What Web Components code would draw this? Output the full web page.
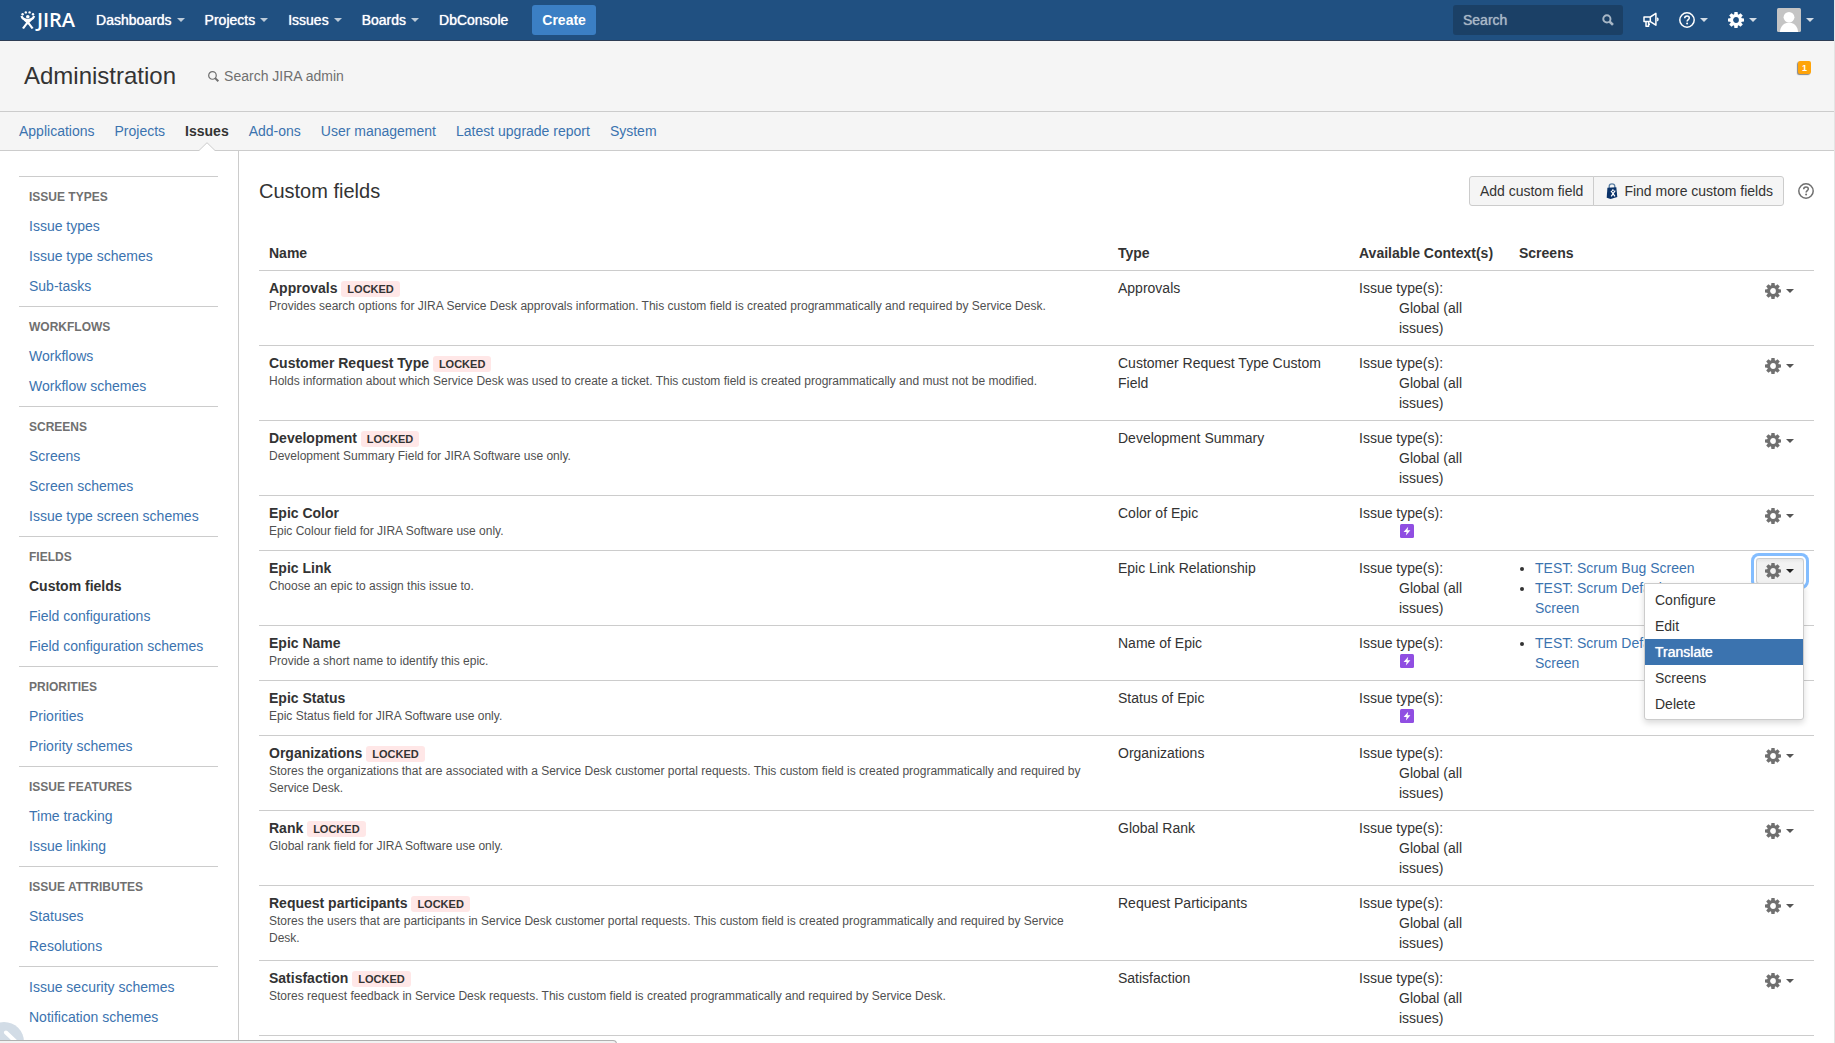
<!DOCTYPE html>
<html lang="en">
<head>
<meta charset="utf-8">
<title>Custom fields - JIRA</title>
<style>
  html { background: #fff; }
  body { margin: 0; font: 14px/20px "Liberation Sans", Arial, sans-serif; color: #333; }
</style>
</head>
<body>
<jira-app></jira-app>
<script>
const define = (name, css, html) => {
  customElements.define(name, class extends HTMLElement {
    connectedCallback() {
      if (this.shadowRoot) return;
      const root = this.attachShadow({ mode: 'open' });
      const body = typeof html === 'function' ? html(this) : html;
      root.innerHTML = `<style>*{box-sizing:border-box}a{color:#3b73af;text-decoration:none}button{font:inherit;color:inherit;cursor:pointer}${css}</style>${body}`;
    }
  });
};

/* ---------- icons ---------- */
const teeth = [0, 45, 90, 135, 180, 225, 270, 315]
  .map(a => `<path d="M6 3.6 6.4 0h3.2l.4 3.6z" transform="rotate(${a} 8 8)"/>`).join('');
const ICONS = {
  gear: `<g fill="currentColor">${teeth}</g><circle cx="8" cy="8" r="4.4" fill="none" stroke="currentColor" stroke-width="3"/>`,
  help: `<g fill="none" stroke="currentColor" stroke-width="1.5"><circle cx="8" cy="8" r="7.2"/><path d="M5.7 6.3C5.7 4.9 6.7 4 8 4s2.3.9 2.3 2.1c0 1.5-2.2 1.7-2.2 3.5"/></g><circle cx="8.1" cy="11.6" r="1" fill="currentColor"/>`,
  search: `<g fill="none" stroke="currentColor"><circle cx="6.5" cy="6.5" r="4.8" stroke-width="2.6"/><path d="M10 10l4.6 4.6" stroke-width="3.4"/></g>`,
  find: `<g fill="none" stroke="currentColor"><circle cx="6.5" cy="6.5" r="5.5" stroke-width="1.8"/><path d="M10 10l5 5" stroke-width="3"/></g>`,
  horn: `<g fill="none" stroke="currentColor" stroke-width="1.5" stroke-linejoin="round"><path d="M1 5h6.3v4.6H1zM7.3 5l5.6-3.6v11.8L7.3 9.6M3 9.6v4.7h2.6V9.6M5.6 12.2H7"/><path d="M14.2 5.8c1 .8 1 2.2 0 3"/></g>`,
  epic: `<rect x="1" y="1" width="14" height="14" rx="1.5" fill="#904ee2"/><path d="M9.2 3.8 4.6 8.900h3l-.7 3.500L11.400 7.300H8.500z" fill="#fff"/>`,
  avatar: `<rect width="16" height="16" rx="1" fill="#c4c4c4"/><circle cx="8" cy="6.2" r="3.6" fill="#fff"/><path d="M1.9 16c.4-3.4 2-5.4 4.4-6h3.4c2.4.6 4 2.6 4.4 6z" fill="#fff"/>`,
  bag: `<path d="M5.2 5V3.3C5.2 1.7 6.3.8 8 .8s2.8.9 2.8 2.500V5" fill="none" stroke="#5b7fa3" stroke-width="1.3"/><path d="M3.4 4.8 12.3 4.2 13.3 14 6.6 16l-3.9-1.2z" fill="#0b3369"/><path d="M7 7.8 11 13.3M11.2 7.6 7.2 13.3" stroke="#fff" stroke-width="1.2"/><circle cx="8.9" cy="7.2" r=".9" fill="#fff"/>`,
  person: `<g fill="currentColor"><circle cx="2.6" cy="3.3" r="1.2"/><circle cx="5.8" cy="1.4" r="1.2"/><circle cx="9.6" cy="1.4" r="1.2"/><circle cx="13" cy="3.3" r="1.2"/><circle cx="7.8" cy="5.7" r="1.8"/></g><g fill="none" stroke="currentColor" stroke-width="2.2"><path d="M1.4 5C2.6 8 4.6 9 7.800 9s5.200-1 6.400-4"/><path d="M4.500 8.600C7 10.600 10.500 13.600 12.600 17.600M11.100 8.600C8.600 10.600 5.100 13.600 3 17.600"/></g>`
};
define('ui-icon', `:host{display:inline-block;width:16px;height:16px;flex:none}svg{display:block;width:100%;height:100%;overflow:visible}`,
  el => {
    const name = el.getAttribute('name');
    return `<svg viewBox="0 0 16 ${name === 'person' ? 18 : 16}" aria-hidden="true">${ICONS[name]}</svg>`;
  });
define('ui-caret', `:host{display:inline-block;flex:none;border:4px solid transparent;border-top-color:currentColor;border-bottom:0}`, '');

/* ---------- top bar ---------- */
define('nav-item', `
  :host{display:block}
  a{display:flex;align-items:center;color:#fff;gap:5px;text-shadow:0 0 1px #fff}
  ui-caret{color:#bdcbd9}`,
  el => `<a href="#"><slot></slot>${el.hasAttribute('menu') ? '<ui-caret></ui-caret>' : ''}</a>`);

define('top-bar', `
  :host{display:flex;align-items:center;height:41px;padding:0 20px;background:#205081;border-bottom:1px solid #2e3d54;color:#fff}
  .logo{display:flex;align-items:center;gap:1px;margin-right:21px;color:#fff;font:600 20px/20px "Open Sans",sans-serif}
  .logo ui-icon{height:18px}
  nav{display:flex;gap:20px}
  .create{height:30px;margin-left:24px;padding:0 10px;border:0;border-radius:3px;background:#3b7fc4;font-weight:bold}
  .tools{display:flex;align-items:center;gap:20px;margin-left:auto}
  .search{display:flex;align-items:center;width:170px;height:30px;padding:0 9px 0 10px;border-radius:3px;background:#1b4066;color:#a8b7c6}
  input{flex:1;min-width:0;padding:0;border:0;background:none;font:inherit;color:inherit;outline:0}
  input::placeholder{color:#a8b7c6;opacity:1;text-shadow:0 0 1px #a8b7c6}
  .search ui-icon{width:12px;height:12px}
  .tool{display:flex;align-items:center;gap:5px;margin:0;padding:0;border:0;background:none}
  .tool ui-caret{color:#d2dce6}
  .avatar ui-icon{width:24px;height:24px}`, `
  <a class="logo" href="#"><ui-icon name="person"></ui-icon><span>JIRA</span></a>
  <nav>
    <nav-item menu>Dashboards</nav-item><nav-item menu>Projects</nav-item><nav-item menu>Issues</nav-item><nav-item menu>Boards</nav-item><nav-item>DbConsole</nav-item>
  </nav>
  <button class="create">Create</button>
  <div class="tools">
    <label class="search"><input type="text" placeholder="Search" aria-label="Search"><ui-icon name="search"></ui-icon></label>
    <button class="tool" aria-label="Feedback"><ui-icon name="horn"></ui-icon></button>
    <button class="tool" aria-label="Help"><ui-icon name="help"></ui-icon><ui-caret></ui-caret></button>
    <button class="tool" aria-label="Administration"><ui-icon name="gear"></ui-icon><ui-caret></ui-caret></button>
    <button class="tool avatar" aria-label="Profile"><ui-icon name="avatar"></ui-icon><ui-caret></ui-caret></button>
  </div>`);

/* ---------- administration heading and tabs ---------- */
define('admin-header', `
  :host{display:flex;align-items:center;height:71px;padding:0 23px 0 24px;background:#f5f5f5;border-bottom:1px solid #ccc}
  h1{margin:0;font-size:24px;line-height:30px;font-weight:normal}
  a{display:flex;align-items:center;gap:5px;margin-left:32px;color:#707070}
  a ui-icon{width:11px;height:11px}
  .badge{align-self:flex-start;width:13px;height:13px;margin:20px 0 0 auto;padding:0;border:0;border-radius:2px;background:#ffa40a;box-shadow:-1px 1px 1px #888;color:#fff;font-size:9px;line-height:10px;font-weight:bold;text-align:center}`, `
  <h1>Administration</h1>
  <a href="#"><ui-icon name="find"></ui-icon>Search JIRA admin</a>
  <button class="badge">1</button>`);

define('admin-tabs', `
  :host{display:block;background:#f5f5f5;border-bottom:1px solid #ccc}
  nav{display:flex;gap:20px;height:38px;padding:0 19px;line-height:38px}
  .on{position:relative;color:#333;font-weight:bold}
  svg{position:absolute;left:50%;bottom:-1px;margin-left:-8px}`, `
  <nav>
    <a href="#">Applications</a><a href="#">Projects</a>
    <a href="#" class="on" aria-current="page">Issues<svg width="16" height="9"><path d="M0 8.5 8 .7l8 7.8V9H0z" fill="#fff"/><path d="M0 8.5 8 .7l8 7.8" fill="none" stroke="#ccc"/></svg></a>
    <a href="#">Add-ons</a><a href="#">User management</a><a href="#">Latest upgrade report</a><a href="#">System</a>
  </nav>`);

/* ---------- sidebar ---------- */
define('side-group', `
  :host{display:block;padding:5px 10px;border-top:1px solid #ccc}
  h2{margin:0;padding:5px 0 4px;font-size:12px;line-height:20px;color:#707070;text-transform:uppercase}
  ul{margin:0;padding:0;list-style:none}
  li{line-height:30px}
  .on{color:#333;font-weight:bold}`,
  el => {
    const t = el.getAttribute('heading');
    const on = el.getAttribute('current');
    return `${t ? `<h2>${t}</h2>` : ''}<ul>${el.getAttribute('links').split('|')
      .map(l => `<li><a href="#"${l === on ? ' class="on" aria-current="page"' : ''}>${l}</a></li>`).join('')}</ul>`;
  });
define('side-nav', `:host{display:block;flex:none;width:239px;padding:25px 20px 0 19px;border-right:1px solid #ccc}`, `
  <nav>
    <side-group heading="Issue types" links="Issue types|Issue type schemes|Sub-tasks"></side-group>
    <side-group heading="Workflows" links="Workflows|Workflow schemes"></side-group>
    <side-group heading="Screens" links="Screens|Screen schemes|Issue type screen schemes"></side-group>
    <side-group heading="Fields" current="Custom fields" links="Custom fields|Field configurations|Field configuration schemes"></side-group>
    <side-group heading="Priorities" links="Priorities|Priority schemes"></side-group>
    <side-group heading="Issue features" links="Time tracking|Issue linking"></side-group>
    <side-group heading="Issue attributes" links="Statuses|Resolutions"></side-group>
    <side-group links="Issue security schemes|Notification schemes"></side-group>
  </nav>`);

/* ---------- table parts ---------- */
define('status-lozenge', `:host{display:inline-block;padding:0 6px;border-radius:3px;background:#ffe7e7;font-size:11px;line-height:16px;font-weight:bold}`, '<slot></slot>');

define('row-actions', `
  :host{display:block;position:relative;width:48px}
  button{display:flex;align-items:center;justify-content:center;gap:5px;width:48px;height:26px;padding:0 8px 0 7px;border:1px solid transparent;border-radius:3px;background:none;color:#707070}
  ui-caret{color:#555}
  :host([open]) button{background:linear-gradient(#e6e6e6,#f2f2f2 4px);border-color:#ccc;box-shadow:0 0 0 2px #fff,0 0 0 5px #83bdff}
  :host([open]) ui-caret{color:#222}
  ul{position:absolute;z-index:2;top:25px;right:0;width:160px;margin:0;padding:3px 0 2px;list-style:none;background:#fff;border:1px solid #ccc;border-radius:0 0 3px 3px;box-shadow:0 3px 6px rgba(0,0,0,.15)}
  a{display:block;padding:0 10px;line-height:26px;color:#333}
  .on{background:#3b73af;color:#fff;text-shadow:0 0 1px #fff}`,
  el => `<button aria-label="Actions"><ui-icon name="gear"></ui-icon><ui-caret></ui-caret></button>
    ${el.hasAttribute('open') ? `<ul>${['Configure', 'Edit', 'Translate', 'Screens', 'Delete']
      .map(t => `<li><a href="#"${t === 'Translate' ? ' class="on"' : ''}>${t}</a></li>`).join('')}</ul>` : ''}`);

const FIELDS = [
  { name: 'Approvals', locked: 1, desc: 'Provides search options for JIRA Service Desk approvals information. This custom field is created programmatically and required by Service Desk.', type: 'Approvals' },
  { name: 'Customer Request Type', locked: 1, desc: 'Holds information about which Service Desk was used to create a ticket. This custom field is created programmatically and must not be modified.', type: 'Customer Request Type Custom Field' },
  { name: 'Development', locked: 1, desc: 'Development Summary Field for JIRA Software use only.', type: 'Development Summary' },
  { name: 'Epic Color', epic: 1, desc: 'Epic Colour field for JIRA Software use only.', type: 'Color of Epic' },
  { name: 'Epic Link', open: 1, desc: 'Choose an epic to assign this issue to.', type: 'Epic Link Relationship', screens: ['TEST: Scrum Bug Screen', 'TEST: Scrum Default Issue Screen'] },
  { name: 'Epic Name', epic: 1, desc: 'Provide a short name to identify this epic.', type: 'Name of Epic', screens: ['TEST: Scrum Default Issue Screen'] },
  { name: 'Epic Status', epic: 1, desc: 'Epic Status field for JIRA Software use only.', type: 'Status of Epic' },
  { name: 'Organizations', locked: 1, desc: 'Stores the organizations that are associated with a Service Desk customer portal requests. This custom field is created programmatically and required by Service Desk.', type: 'Organizations' },
  { name: 'Rank', locked: 1, desc: 'Global rank field for JIRA Software use only.', type: 'Global Rank' },
  { name: 'Request participants', locked: 1, desc: 'Stores the users that are participants in Service Desk customer portal requests. This custom field is created programmatically and required by Service Desk.', type: 'Request Participants' },
  { name: 'Satisfaction', locked: 1, desc: 'Stores request feedback in Service Desk requests. This custom field is created programmatically and required by Service Desk.', type: 'Satisfaction' }
];

define('fields-table', `
  :host{display:block}
  table{width:100%;border-collapse:separate;border-spacing:0;table-layout:fixed}
  th,td{padding:7px 10px;border-bottom:1px solid #ccc;text-align:left;vertical-align:top}
  .type{width:241px}.context{width:160px}.screens{width:237px}.actions{width:68px}
  .name{height:20px;font-weight:bold}
  .desc{padding-right:10px;font-size:12px;line-height:17px;color:#505050}
  dl,dd,ul{margin:0}
  dd{padding-left:40px}
  dd.icon{display:flex;height:20px}
  ul{padding-left:16px}`,
  `<table>
    <thead><tr><th>Name</th><th class="type">Type</th><th class="context">Available Context(s)</th><th class="screens">Screens</th><th class="actions" aria-label="Actions"></th></tr></thead>
    <tbody>${FIELDS.map(f => `<tr>
      <td><div class="name">${f.name}${f.locked ? ' <status-lozenge>LOCKED</status-lozenge>' : ''}</div><div class="desc">${f.desc}</div></td>
      <td>${f.type}</td>
      <td><dl><dt>Issue type(s):</dt>${f.epic ? '<dd class="icon"><ui-icon name="epic"></ui-icon></dd>' : '<dd>Global (all issues)</dd>'}</dl></td>
      <td>${f.screens ? `<ul>${f.screens.map(s => `<li><a href="#">${s}</a></li>`).join('')}</ul>` : ''}</td>
      <td><row-actions${f.open ? ' open' : ''}></row-actions></td>
    </tr>`).join('')}</tbody>
  </table>`);

define('fields-page', `
  :host{display:block;flex:1;min-width:0;padding:25px 20px 0}
  header{display:flex;align-items:center;height:30px;margin-bottom:30px}
  h2{margin:0 auto 0 0;font-size:20px;line-height:30px;font-weight:normal}
  .group{display:flex;margin-right:14px}
  .group button{display:flex;align-items:center;gap:4px;height:30px;padding:0 10px;border:1px solid #ccc;background:#f5f5f5;border-radius:3px 0 0 3px}
  .group button+button{margin-left:-1px;border-radius:0 3px 3px 0}
  .help{display:flex;padding:0;border:0;background:none;color:#707070}`, `
  <header>
    <h2>Custom fields</h2>
    <div class="group"><button>Add custom field</button><button><ui-icon name="bag"></ui-icon>Find more custom fields</button></div>
    <button class="help" aria-label="Help"><ui-icon name="help"></ui-icon></button>
  </header>
  <fields-table></fields-table>`);

/* ---------- browser overlays at the bottom-left corner ---------- */
define('corner-overlays', `
  :host{position:fixed;left:0;bottom:0;z-index:5;width:617px;height:21px;overflow:hidden;pointer-events:none}
  svg{display:block}
  .bar{position:absolute;left:0;right:0;bottom:-2px;height:5px;background:#f2f2f2;border:1px solid #b0b0b0;border-left:0;border-radius:0 4px 0 0}`, `
  <svg width="24" height="21"><circle cx="4" cy="20" r="20" fill="#d2dce6"/><path d="M6 10.5 16 20" stroke="#fff" stroke-width="4" stroke-linecap="round"/></svg>
  <div class="bar"></div>`);

define('jira-app', `
  :host{display:flex;flex-direction:column;min-height:100vh;box-sizing:border-box;border-right:1px solid #e4e4e4}
  main{display:flex;flex:1}`, `
  <top-bar></top-bar>
  <admin-header></admin-header>
  <admin-tabs></admin-tabs>
  <main><side-nav></side-nav><fields-page></fields-page></main>
  <corner-overlays></corner-overlays>`);
</script>
</body>
</html>
